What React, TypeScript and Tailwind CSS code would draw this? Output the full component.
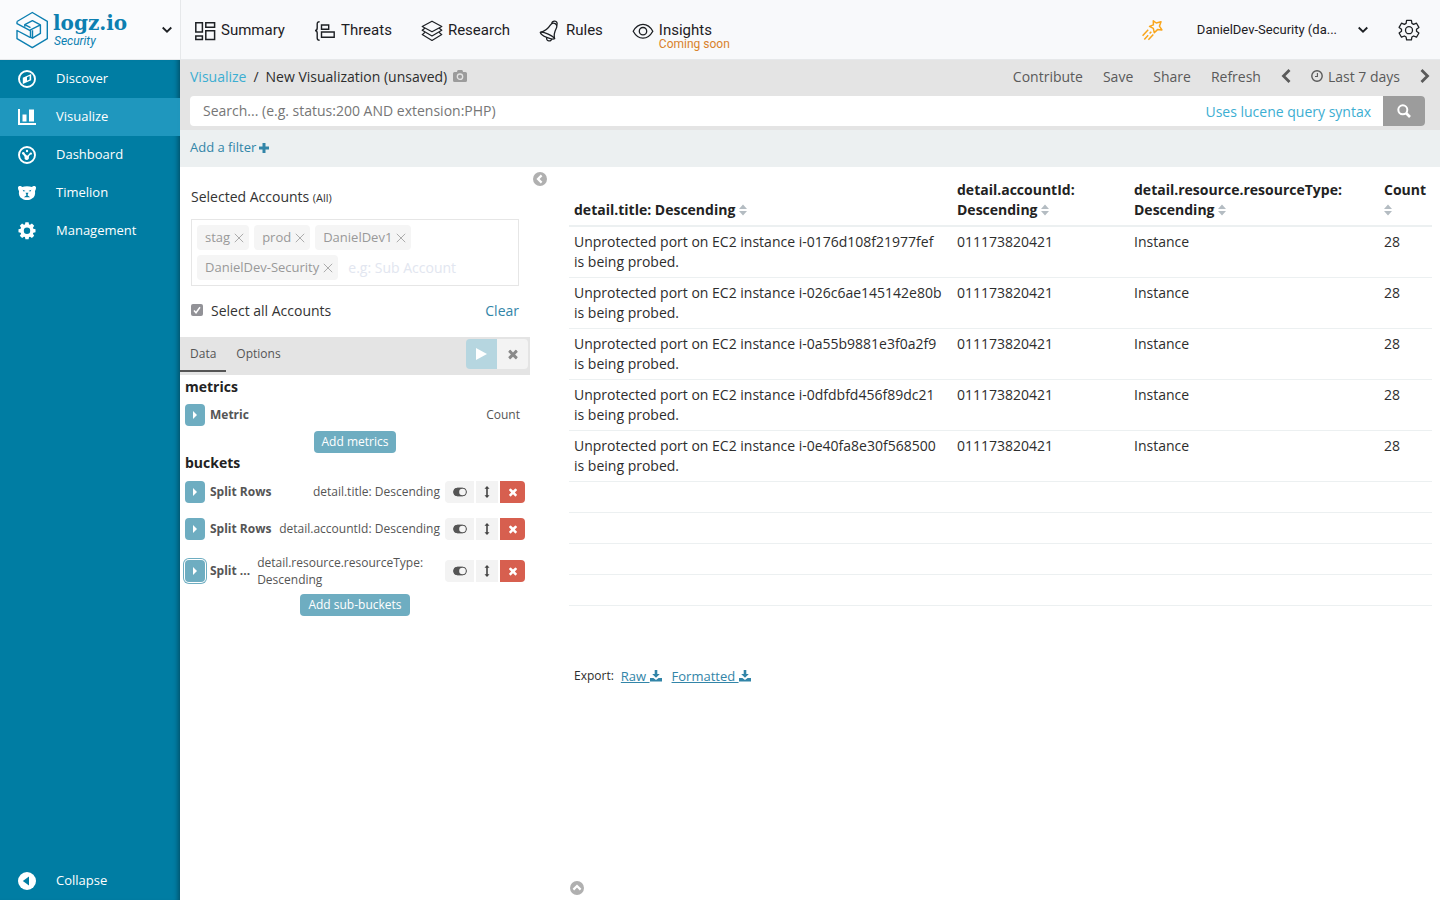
import { ReactNode } from "react";

type IconProps = { className?: string };

function Caret({ className = "" }: IconProps) {
  return (
    <svg viewBox="0 0 12 8" className={className} fill="none" stroke="currentColor" strokeWidth="1.800">
      <path d="M1.700 1.500 6 5.700l4.300-4.200" />
    </svg>
  );
}

function LogoMark() {
  return (
    <svg viewBox="0 0 34 38" className="h-[38px] w-[34px] shrink-0 text-[#0c7fb1]" fill="none" stroke="currentColor" strokeWidth="1.4" strokeLinejoin="round">
      <path d="M2 10.500 17.300 1.500l15 8.800v17.400l-15 8.900L2 27.700v-8.200l13.500 7.200" />
      <path d="M2 10.500v2.200l13.700 7.200" />
      <path d="M9.800 15.800v-2.200l7.600-4 8 4.300v8.500l-7.900 4.800-2-1v-7.300l9.900-5" />
      <path d="m9.800 13.600 5.700 3M17.500 19.200v8" />
    </svg>
  );
}

const headerIcon = "size-[22px] shrink-0";

const SummaryIcon = () => (
  <svg viewBox="0 0 22 22" className={headerIcon} fill="none" stroke="currentColor" strokeWidth="1.500">
    <path d="M1.800 2.800h6.600v9.100H1.800zM11.800 2.800h8.800v4.400h-8.800zM1.800 16h6.600v3.600H1.800zM11.800 10.700h8.800v8.900h-8.800z" />
  </svg>
);

const ThreatsIcon = () => (
  <svg viewBox="0 0 22 22" className={headerIcon} fill="none" stroke="currentColor" strokeWidth="1.400">
    <path d="M5.600 1.700c-1.700 0-2.400.7-2.400 2.200v4.200c0 1.500-.5 2.500-2.200 2.500 1.700 0 2.200 1 2.200 2.500v4.900c0 1.500.7 2.200 2.400 2.200M7.500 5h7.200v4.200H7.500zM7.500 12h12.700v5.200H7.500z" />
  </svg>
);

const ResearchIcon = () => (
  <svg viewBox="0 0 22 22" className={headerIcon} fill="none" stroke="currentColor" strokeWidth="1.200" strokeLinejoin="round">
    <path d="M11 1.200 20.800 6.500 11 11.800 1.200 6.500zM3.800 8.200 1.200 10.300 11 16l9.800-5.700-2.600-2.100M3.800 12.500 1.200 14.600 11 20.500l9.800-5.900-2.600-2.100" />
  </svg>
);

const RulesIcon = () => (
  <svg viewBox="0 0 22 22" className={headerIcon} fill="none" stroke="currentColor" strokeWidth="1.300" strokeLinejoin="round">
    <path d="M1.300 12.300C6 11.500 9 8.800 11.300 5.200c1.300-2 3-2.700 4.900-1.600s2 2.900 1 4.900c-1.800 3.500-2.600 6.700-1.600 10.300" />
    <path d="M1.300 12.300c3.300-.8 13 3.500 14.300 6.500-2.500 1.600-13.700-3-14.300-6.500z" />
    <path d="M12.800 3.500c.2-1.700 1.500-2.400 3-2.300 1.900.1 2.900 1.600 2 4.200M7.800 17.400c-.6 1.900.3 3.200 1.900 3.500 1.500.3 2.700-.4 2.900-1.900" />
  </svg>
);

const EyeIcon = () => (
  <svg viewBox="0 0 22 22" className={headerIcon} fill="none" stroke="currentColor" strokeWidth="1.300">
    <path d="M1.200 11.200C3.600 6.800 7.100 4.300 11 4.300s7.400 2.500 9.800 6.900c-2.400 4.400-5.900 6.900-9.800 6.900s-7.400-2.500-9.800-6.900z" />
    <circle cx="11" cy="11.200" r="3.700" />
  </svg>
);

const StarIcon = () => (
  <svg viewBox="0 0 22 22" className={headerIcon} fill="none" stroke="#f9a51a" strokeWidth="1.500" strokeLinejoin="round">
    <path d="m12.300 1.800 3 2.200 4.700-1.200-1.600 4.400 2.500 3.700-4.400-.3-3.200 3.200-1-4.400-3.800-2 3.900-1.500z" />
    <path d="m7.200 10.700-5.600 6M10.300 12.800 8.600 14.600M7.200 16.200l-3.900 4.300M12.300 15.500l-4.900 5.200" strokeLinecap="butt" />
  </svg>
);

const GearOutline = () => (
  <svg viewBox="0 0 22 22" className={headerIcon} fill="none" stroke="currentColor" strokeWidth="1.300" strokeLinejoin="round">
    <path d="M8.600 1.300h4.800l.5 3.100 1.700 1 2.900-1.200 2.400 4.200-2.400 1.800v2l2.400 1.800-2.400 4.200-2.900-1.200-1.700 1-.5 2.900H8.600l-.5-2.900-1.700-1-2.900 1.200L1.100 14l2.400-1.800v-2L1.100 8.400l2.400-4.200 2.900 1.200 1.700-1z" />
    <circle cx="11" cy="11.200" r="3.500" />
  </svg>
);

function TimesIcon({ className = "" }: IconProps) {
  return (
    <svg viewBox="0 0 1792 1792" className={className} fill="currentColor">
      <path d="M1490 1322q0 40-28 68l-136 136q-28 28-68 28t-68-28l-294-294-294 294q-28 28-68 28t-68-28l-136-136q-28-28-28-68t28-68l294-294-294-294q-28-28-28-68t28-68l136-136q28-28 68-28t68 28l294 294 294-294q28-28 68-28t68 28l136 136q28 28 28 68t-28 68l-294 294 294 294q28 28 28 68z" />
    </svg>
  );
}

const CompassIcon = () => (
  <svg viewBox="0 0 18 18" className="size-[18px]" fill="none" stroke="currentColor">
    <circle cx="9" cy="9" r="8" strokeWidth="1.900" />
    <path fill="currentColor" fillRule="evenodd" stroke="none" d="M13.200 4v6.200L4.800 14V7.800zM9 7.200v3.500l2.600-1.300V6.100z" />
  </svg>
);

const BarsIcon = () => (
  <svg viewBox="0 0 18 18" className="size-[18px]" fill="currentColor">
    <path d="M0 1h2v14h16v2H0zM4.500 6.500h4v7h-4zM11 1.500h5v12h-5z" />
  </svg>
);

const GaugeIcon = () => (
  <svg viewBox="0 0 18 18" className="size-[18px]" fill="currentColor">
    <circle cx="9" cy="9" r="8" fill="none" stroke="currentColor" strokeWidth="1.900" />
    <circle cx="5.300" cy="7.200" r="1.300" />
    <circle cx="9" cy="5" r="1.200" />
    <circle cx="12.800" cy="7.600" r="1.200" />
    <path d="m4.800 8 1.200-1 3.200 2.700 2.600-2.300.7.700-1.700 2.700c.6 1.900-.4 3.300-2 3.300-1.900 0-2.700-1.500-2.100-3z" />
  </svg>
);

const BearIcon = () => (
  <svg viewBox="0 0 18 18" className="size-[18px]" fill="currentColor">
    <path fillRule="evenodd" d="M0 3.500C0 1.700 3.200 1.500 4 2.900c3-1 7-1 10 0 .8-1.400 4-1.200 4 .6 0 1.600-.4 2.700-1 3.400.6 3.400-.6 6.400-3 7.700-2.600 2-7.400 2-10 0-2.400-1.300-3.600-4.300-3-7.700C.4 6.200 0 5.100 0 3.500zM4.600 5.700l3 1.200-2 .5zM13.400 5.700l-3 1.200 2 .5zM7.500 8.800h3L9.700 10.500v1l2.500 1.700H5.800l2.500-1.700v-1z" />
  </svg>
);

const CogIcon = () => (
  <svg viewBox="0 0 512 512" className="size-[20px]" fill="currentColor">
    <path fillRule="evenodd" d="M215 32h82l11 56 26 11 48-33 58 58-33 48 11 26 56 11v82l-56 11-11 26 33 48-58 58-48-33-26 11-11 56h-82l-11-56-26-11-48 33-58-58 33-48-11-26-56-11v-82l56-11 11-26-33-48 58-58 48 33 26-11zM256 168a82 82 0 1 0 0 164 82 82 0 0 0 0-164z" />
  </svg>
);

const CollapseIcon = () => (
  <svg viewBox="0 0 18 18" className="size-[18px]">
    <circle cx="9" cy="9" r="9" fill="currentColor" />
    <path d="M11 4.500v9L4.800 9z" fill="#007da3" />
  </svg>
);

const CameraIcon = () => (
  <svg viewBox="0 0 14 12" className="h-3 w-[14px] text-[#9c9c9c]" fill="currentColor">
    <path d="M1.500 2h2.400l.8-2h4.600l.8 2h2.400Q14 2 14 3.500v7q0 1.500-1.500 1.500h-11Q0 12 0 10.500v-7Q0 2 1.500 2z" />
    <circle cx="7" cy="6.700" r="2.700" fill="none" stroke="#e4e4e4" strokeWidth="1.300" />
  </svg>
);

const ClockIcon = () => (
  <svg viewBox="0 0 12 12" className="size-3" fill="none" stroke="currentColor" strokeWidth="1.400">
    <circle cx="6" cy="6" r="5.200" />
    <path d="M6.400 3v3.500H4" strokeWidth="1.100" />
  </svg>
);

const ChevronIcon = ({ className = "" }: IconProps) => (
  <svg viewBox="0 0 10 14" className={className} fill="none" stroke="currentColor" strokeWidth="2.800">
    <path d="M8.500 1 2.500 7l6 6" />
  </svg>
);

const SearchIcon = () => (
  <svg viewBox="0 0 14 14" className="size-[14px]" fill="none" stroke="currentColor" strokeWidth="2">
    <circle cx="5.800" cy="5.800" r="4.500" />
    <path d="m9 9 4 4" strokeWidth="2.600" />
  </svg>
);

const RoundChevron = ({ className = "" }: IconProps) => (
  <svg viewBox="0 0 14 14" className={className}>
    <circle cx="7" cy="7" r="7" fill="#b0b0b0" />
    <path d="M8.600 3.400 5 7l3.600 3.600" fill="none" stroke="#fff" strokeWidth="2.200" />
  </svg>
);

const SortIcon = () => (
  <svg viewBox="0 0 8 12" className="inline h-3 w-2 align-[-1px]" fill="#b4bcc2">
    <path d="M4 .5 8 5H0zM4 11.500 8 7H0z" />
  </svg>
);

const DownloadIcon = () => (
  <svg viewBox="0 0 12 12" className="inline size-3 align-[-1px]" fill="currentColor">
    <path d="M4.700 0h2.600v4h2.500L6 7.800 2.200 4h2.500zM0 8h3.400L6 10l2.600-2H12v3.500H0z" />
  </svg>
);

const ToggleIcon = () => (
  <svg viewBox="0 0 14 10" className="h-[10px] w-[14px]">
    <rect x=".6" y="1.100" width="12.800" height="7.800" rx="3.900" fill="#555" stroke="#555" />
    <circle cx="9.500" cy="5" r="3.300" fill="#f5f5f5" />
  </svg>
);

const ResizeIcon = () => (
  <svg viewBox="0 0 6 12" className="h-3 w-[6px]" fill="#444">
    <path d="M3 0l2.500 2.700H3.800v6.600h1.700L3 12 .5 9.300h1.700V2.700H.5z" />
  </svg>
);

const navItems: { label: string; icon: ReactNode; active?: boolean }[] = [
  { label: "Discover", icon: <CompassIcon /> },
  { label: "Visualize", icon: <BarsIcon />, active: true },
  { label: "Dashboard", icon: <GaugeIcon /> },
  { label: "Timelion", icon: <BearIcon /> },
  { label: "Management", icon: <CogIcon /> },
];

function SideLink({ label, icon, active }: { label: string; icon: ReactNode; active?: boolean }) {
  return (
    <a href="#" className={`flex h-[38px] items-center text-[13px] text-white ${active ? "bg-[#2199c0]/95" : ""}`}>
      <span className="flex w-14 justify-center pr-[2px]">{icon}</span>
      {label}
    </a>
  );
}

function Header() {
  const link = "flex items-center gap-[5px]";
  return (
    <header className="flex h-[60px] items-center border-b border-[#e6e8ea] bg-[#f8f9fb] font-['Roboto',sans-serif] text-[15px] text-[#1d2024]">
      <div className="flex h-full w-[181px] shrink-0 items-center border-r border-[#e6e8ea] bg-[#fafbfd] pl-[15px]">
        <a href="#" className="flex items-center gap-1">
          <LogoMark />
          <span className="flex w-[76px] flex-col text-[#0c7fb1]">
            <span className="font-['DejaVu_Serif',serif] text-[20px] leading-[22px] font-bold">logz.io</span>
            <span className="pl-px text-[12px] leading-[14px] italic">Security</span>
          </span>
        </a>
        <button aria-label="Switch product" className="ml-auto pr-[7px]">
          <Caret className="h-2 w-3" />
        </button>
      </div>
      <nav className="flex items-center gap-[29px] pt-[2px] pl-[13px]">
        <a href="#" className={link}><SummaryIcon />Summary</a>
        <a href="#" className={link}><ThreatsIcon />Threats</a>
        <a href="#" className={link}><ResearchIcon />Research</a>
        <a href="#" className={link}><RulesIcon />Rules</a>
        <a href="#" className={`relative ${link}`}>
          <EyeIcon />Insights
          <span className="absolute top-[18px] left-[27px] text-[12px] leading-[14px] whitespace-nowrap text-[#d9822b]">Coming soon</span>
        </a>
      </nav>
      <div className="ml-auto flex items-center pt-px pr-5">
        <button aria-label="What's new"><StarIcon /></button>
        <button className="ml-[34px] flex items-center gap-5 text-[13px]">
          DanielDev-Security (da...
          <Caret className="h-2 w-3" />
        </button>
        <button aria-label="Settings" className="ml-[29px]"><GearOutline /></button>
      </div>
    </header>
  );
}

function Toolbar() {
  return (
    <div className="bg-[#e4e4e4] pb-1 text-[14px] text-[#5a5a5a]">
      <div className="flex h-9 items-center pr-[10px] pb-1 pl-[10px]">
        <div className="flex items-center text-[#2d2d2d]">
          <a href="#" className="text-[#3caed2]">Visualize</a>
          <span className="mx-[7px]">/</span>
          <span className="mr-[6px]">New Visualization (unsaved)</span>
          <button aria-label="Snapshot"><CameraIcon /></button>
        </div>
        <div className="ml-auto flex items-center gap-5">
          <button>Contribute</button>
          <button>Save</button>
          <button>Share</button>
          <button>Refresh</button>
          <button aria-label="Earlier"><ChevronIcon className="h-[14px] w-[10px]" /></button>
          <button className="flex items-center gap-[5px]"><ClockIcon />Last 7 days</button>
          <button aria-label="Later"><ChevronIcon className="h-[14px] w-[10px] rotate-180" /></button>
        </div>
      </div>
      <form className="mr-[15px] ml-[10px] flex h-[30px] overflow-hidden rounded bg-white">
        <input aria-label="Search" placeholder="Search... (e.g. status:200 AND extension:PHP)" className="min-w-0 flex-1 px-[13px] pb-[2px] placeholder:text-[#767676]" />
        <a href="#" className="self-center pr-3 text-[#3caed2]">Uses lucene query syntax</a>
        <button type="button" aria-label="Run search" className="flex w-[42px] items-center justify-center bg-[#9c9c9c] text-white"><SearchIcon /></button>
      </form>
    </div>
  );
}

function Tag({ children }: { children: ReactNode }) {
  return (
    <span className="flex h-[25px] items-center gap-1 rounded bg-[#f5f5f5] pr-[5px] pl-2 text-[13px] text-[#999]">
      {children}
      <button aria-label={`Remove ${children}`}>
        <svg viewBox="0 0 10 10" className="size-[10px]" stroke="currentColor" strokeWidth=".8"><path d="m.8.800 8.400 8.400M9.200.800.800 9.200" /></svg>
      </button>
    </span>
  );
}

function ExpandButton({ focused }: { focused?: boolean }) {
  return (
    <button
      aria-label="Expand"
      className={`flex h-[22px] w-5 shrink-0 items-center justify-center rounded bg-[#6eadc1] text-white ${focused ? "shadow-[0_0_0_1px_white,0_0_0_2px_#6eadc1]" : ""}`}
    >
      <svg viewBox="0 0 4 8" className="h-2 w-1" fill="currentColor"><path d="M0 0l4 4-4 4z" /></svg>
    </button>
  );
}

function BucketRow({ name, detail, tall }: { name: string; detail: string; tall?: boolean }) {
  return (
    <div className={`flex items-center pr-[5px] pl-[5px] ${tall ? "h-12" : "h-[37px]"}`}>
      <ExpandButton focused={tall} />
      <span className="mr-[7px] ml-[5px] shrink-0 font-bold whitespace-nowrap">{name}</span>
      <span className={`mr-[5px] flex-1 leading-[17px] ${tall ? "text-left" : "text-right"}`}>{detail}</span>
      <div className="flex h-[22px] gap-[2px]">
        <button aria-label="Toggle" className="flex w-[29px] items-center justify-center rounded-l bg-[#f3f3f3]"><ToggleIcon /></button>
        <button aria-label="Reorder" className="flex w-[22px] items-center justify-center bg-[#f3f3f3]"><ResizeIcon /></button>
        <button aria-label="Remove" className="flex w-[25px] items-center justify-center rounded-r bg-[#d75f4f] text-white"><TimesIcon className="size-3" /></button>
      </div>
    </div>
  );
}

function Editor() {
  const add = "mx-auto flex h-[22px] items-center rounded bg-[#6eadc1] px-2 text-[12px] font-medium text-white";
  const tab = "h-[35px] border-b-2 px-[10px]";
  return (
    <aside className="w-[350px] shrink-0 text-[12px] text-[#555]">
      <div className="px-[11px] pt-5 text-[14px] text-[#333]">
        <h2 className="leading-[20px]">Selected Accounts <span className="text-[11px]">(All)</span></h2>
        <div className="mt-[11px] flex flex-wrap gap-[5px] border border-[#e6e6e6] px-[5px] pt-[5px] pb-[5px]">
          <Tag>stag</Tag>
          <Tag>prod</Tag>
          <Tag>DanielDev1</Tag>
          <Tag>DanielDev-Security</Tag>
          <input aria-label="Sub account" placeholder="e.g: Sub Account" className="h-[25px] w-[130px] pl-[5px] text-[14px] placeholder:text-[#e2e6f0]" />
        </div>
        <div className="mt-[14px] flex h-5 items-center">
          <label className="flex items-center gap-2">
            <span className="relative flex size-3">
              <input type="checkbox" defaultChecked className="size-3 appearance-none rounded-[2px] bg-[#929297]" />
              <svg viewBox="0 0 12 12" className="pointer-events-none absolute inset-0 size-3" fill="none" stroke="#fff" strokeWidth="1.500"><path d="m3 6.500 2 2.200 4-5.400" /></svg>
            </span>
            Select all Accounts
          </label>
          <button className="ml-auto text-[#3285a8]">Clear</button>
        </div>
      </div>
      <div className="mt-[17px] flex h-[38px] items-start bg-[#e4e4e4] pr-[2px]">
        <button className={`${tab} border-[#555]`}>Data</button>
        <button className={`${tab} border-transparent`}>Options</button>
        <div className="mt-[2px] ml-auto flex h-[30px] overflow-hidden rounded">
          <button aria-label="Apply changes" className="flex w-[31px] items-center justify-center bg-[#b6d6e0] text-white">
            <svg viewBox="0 0 11 12" className="h-3 w-[11px]" fill="currentColor"><path d="M0 0l11 6-11 6z" /></svg>
          </button>
          <button aria-label="Discard changes" className="flex w-[31px] items-center justify-center bg-[#f3f3f3] text-[#8a8a8a]"><TimesIcon className="size-[14px]" /></button>
        </div>
      </div>
      <h3 className="pl-[5px] text-[14px] leading-[24px] font-bold text-[#222]">metrics</h3>
      <div className="flex h-8 items-center pr-[10px] pl-[5px]">
        <ExpandButton />
        <span className="ml-[5px] font-bold">Metric</span>
        <span className="ml-auto">Count</span>
      </div>
      <button className={add}>Add metrics</button>
      <h3 className="pl-[5px] text-[14px] leading-[20px] font-bold text-[#222]">buckets</h3>
      <BucketRow name="Split Rows" detail="detail.title: Descending" />
      <BucketRow name="Split Rows" detail="detail.accountId: Descending" />
      <BucketRow name="Split ..." detail="detail.resource.resourceType: Descending" tall />
      <button className={`${add} -mt-px`}>Add sub-buckets</button>
    </aside>
  );
}

const instances = ["i-0176d108f21977fef", "i-026c6ae145142e80b", "i-0a55b9881e3f0a2f9", "i-0dfdbfd456f89dc21", "i-0e40fa8e30f568500"];
const columns = ["detail.title: Descending", "detail.accountId: Descending", "detail.resource.resourceType: Descending", "Count"];

function Results() {
  const cell = "p-[5px] align-top";
  return (
    <section className="flex min-w-0 flex-1 flex-col pt-2 pr-2 pb-[5px] pl-[22px] text-[14px] text-[#2d2d2d]">
      <table className="w-full table-fixed border-collapse text-left leading-[20px]">
        <colgroup>
          <col />
          <col className="w-[177px]" />
          <col className="w-[250px]" />
          <col className="w-[53px]" />
        </colgroup>
        <thead>
          <tr className="border-b-2 border-[#ecf0f1]">
            {columns.map((c) => (
              <th key={c} className="p-[5px] align-bottom font-bold text-[#222]">{c} <SortIcon /></th>
            ))}
          </tr>
        </thead>
        <tbody>
          {instances.map((id) => (
            <tr key={id} className="border-b border-[#ecf0f1]">
              <td className="py-[5px] pr-[10px] pl-[5px] align-top">{`Unprotected port on EC2 instance ${id} is being probed.`}</td>
              <td className={cell}>011173820421</td>
              <td className={cell}>Instance</td>
              <td className={cell}>28</td>
            </tr>
          ))}
          {[0, 1, 2, 3].map((n) => (
            <tr key={n} className="h-[31px] border-b border-[#ecf0f1]"><td colSpan={4} /></tr>
          ))}
        </tbody>
      </table>
      <div className="mt-[60px] flex items-center pl-[5px] leading-[20px]">
        <span className="mr-[7px] text-[12px]">Export:</span>
        <a href="#" className="mr-[10px] text-[13px] text-[#3285a8] underline">Raw <DownloadIcon /></a>
        <a href="#" className="text-[13px] text-[#3285a8] underline">Formatted <DownloadIcon /></a>
      </div>
      <button aria-label="Show details" className="mt-auto w-fit pl-px"><RoundChevron className="size-[14px] rotate-90" /></button>
    </section>
  );
}

export default function App() {
  return (
    <div className="flex min-h-screen flex-col bg-white font-['Open_Sans',sans-serif]">
      <Header />
      <div className="flex flex-1">
        <nav className="flex w-[180px] shrink-0 flex-col bg-[#007da3] shadow-[inset_-6px_0_5px_-4px_rgba(0,0,0,0.35)]">
          {navItems.map((item) => <SideLink key={item.label} {...item} />)}
          <div className="mt-auto"><SideLink label="Collapse" icon={<CollapseIcon />} /></div>
        </nav>
        <div className="flex min-w-0 flex-1 flex-col">
          <Toolbar />
          <div className="flex h-[37px] items-center bg-[#ecf0f1] px-[10px] pb-[2px] text-[13px] text-[#3285a8]">
            <button className="flex items-center gap-[3px]">
              Add a filter
              <svg viewBox="0 0 10 10" className="size-[10px]" fill="currentColor"><path d="M3.500 0h3v3.500H10v3H6.500V10h-3V6.500H0v-3h3.500z" /></svg>
            </button>
          </div>
          <main className="flex flex-1">
            <Editor />
            <button aria-label="Hide editor" className="mt-[5px] ml-[3px] size-[14px] shrink-0"><RoundChevron className="size-[14px]" /></button>
            <Results />
          </main>
        </div>
      </div>
    </div>
  );
}
